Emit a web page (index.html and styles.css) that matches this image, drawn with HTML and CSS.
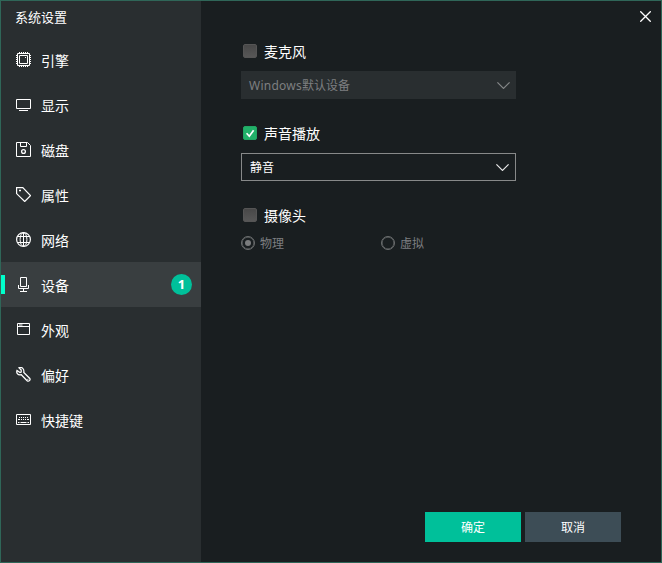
FILE: index.html
```html
<!DOCTYPE html>
<html lang="zh-CN">
<head>
<meta charset="utf-8">
<title>系统设置</title>
<link rel="stylesheet" href="styles.css">
</head>
<body>
<div class="window">
  <aside class="sidebar">
    <h1 class="title">系统设置</h1>
    <nav class="menu">
      <a class="item"><svg class="icon" viewBox="0 0 15 15"><path d="M1.5 1.5h12v12h-12z"/><path d="M3.5 3.5h8v8h-8zM9 5.5h1"/><path d="M3.5 0v2M5.5 0v2M7.5 0v2M9.5 0v2M11.5 0v2M3.5 13v2M5.5 13v2M7.5 13v2M9.5 13v2M11.5 13v2M0 3.5h2M0 5.5h2M0 7.5h2M0 9.5h2M0 11.5h2M13 3.5h2M13 5.5h2M13 7.5h2M13 9.5h2M13 11.5h2"/></svg><span>引擎</span></a>
      <a class="item"><svg class="icon" viewBox="0 0 15 15"><path d="M.5 2.5h14v9H.5zM3 13.5h9"/></svg><span>显示</span></a>
      <a class="item"><svg class="icon" viewBox="0 0 15 15"><path d="M.5.5h11l3 3v11H.5zM4.5.5v4h6v-4"/><circle cx="7.5" cy="9.5" r="1.9" stroke-width="1.3"/></svg><span>磁盘</span></a>
      <a class="item"><svg class="icon" viewBox="0 0 15 15"><path d="M.6.6h6.2l7.7 8-5.8 5.9L.6 6.6z" stroke-width="1.2"/><path d="M3 3.5h2" stroke-width="1.7"/></svg><span>属性</span></a>
      <a class="item"><svg class="icon" viewBox="0 0 15 15"><circle cx="7.5" cy="7.5" r="6.9" stroke-width="1.2"/><ellipse cx="7.5" cy="7.5" rx="3.4" ry="6.9"/><path d="M7.5.5v14M1.2 4.5h12.6M1.2 10.5h12.6"/></svg><span>网络</span></a>
      <a class="item active"><svg class="icon" viewBox="0 0 15 15"><path d="M4.5.5h6v9h-6zM2.5 8v3.5h10V8M7.5 11.5v3M4 14.5h7"/></svg><span>设备</span><b class="badge">1</b></a>
      <a class="item"><svg class="icon" viewBox="0 0 15 15"><path d="M1.5 1.5h12v11h-12zM1.5 4.5h12M3 3h3.5"/></svg><span>外观</span></a>
      <a class="item"><svg class="icon" viewBox="0 0 15 15"><path d="M3 .8 5.2 3v2L4 5.5 1 3.5C.1 6 1.8 8.5 5.3 7.7l5.8 6c1.6 1.4 3.9-.8 2.5-2.5L7.8 5.5C8.4 2 6-.4 3 .8zM11.6 12l.6.6" stroke-width="1.25"/></svg><span>偏好</span></a>
      <a class="item"><svg class="icon" viewBox="0 0 15 15"><path d="M.5 2.5h14v10H.5z"/><path d="M3 5.5h1M5 5.5h1M7 5.5h1M9 5.5h1M11 5.5h1M2 7.5h2M5 7.5h1M7 7.5h1M9 7.5h1M11 7.5h2M2 10.5h1.5M4.5 10.5h6M11.5 10.5h1.5"/></svg><span>快捷键</span></a>
    </nav>
  </aside>
  <main class="content">
    <header class="topbar"><svg class="close" viewBox="0 0 11 11"><path d="m.3.3 10.4 10.4M10.7.3.3 10.7"/></svg></header>
    <div class="form">
      <section class="group">
        <label class="check"><i class="box"></i><span>麦克风</span></label>
        <div class="select disabled"><span><span class="latin">Windows</span>默认设备</span><svg class="chevron" viewBox="0 0 13 7"><path d="m.4.4 6.1 6 6.1-6"/></svg></div>
      </section>
      <section class="group">
        <label class="check"><i class="box checked"><svg viewBox="0 0 14 14"><path d="m3.6 7.2 2.7 3 4.3-6"/></svg></i><span>声音播放</span></label>
        <div class="select"><span>静音</span><svg class="chevron" viewBox="0 0 13 7"><path d="m.4.4 6.1 6 6.1-6"/></svg></div>
      </section>
      <section class="group">
        <label class="check"><i class="box"></i><span>摄像头</span></label>
        <div class="radios">
          <label class="radio"><i class="dot on"></i><span>物理</span></label>
          <label class="radio"><i class="dot"></i><span>虚拟</span></label>
        </div>
      </section>
    </div>
    <footer class="actions">
      <button class="btn primary">确定</button>
      <button class="btn">取消</button>
    </footer>
  </main>
</div>
</body>
</html>
```
FILE: styles.css
```css
* { box-sizing: border-box; }
body {
  margin: 0;
  font-family: "Noto Sans", "Noto Sans CJK SC", sans-serif;
  color: #fff;
  background: #191e20;
}
.window {
  display: flex;
  width: 662px;
  height: 563px;
  border: 1px solid #2f6658;
  background: #191e20;
}
.sidebar { width: 200px; background: #292e30; }
.title {
  height: 36px;
  margin: 0;
  padding: 6px 0 0 14px;
  font-size: 13px;
  font-weight: 400;
  line-height: 20px;
}
.item {
  display: flex;
  align-items: center;
  height: 45px;
  padding: 0 9px 0 15px;
  font-size: 14px;
  line-height: 20px;
}
.item span { margin: 3px 0 0 10px; }
.item.active {
  padding-left: 11px;
  background: #393e40;
}
.item.active::before {
  content: "";
  width: 4px;
  height: 19px;
  margin-left: -11px;
  margin-right: 11px;
  background: #00ffcb;
}
.icon {
  flex: none;
  width: 15px;
  height: 15px;
  fill: none;
  stroke: #fff;
  stroke-width: 1;
}
.badge {
  width: 21px;
  height: 21px;
  margin-left: auto;
  border-radius: 50%;
  background: #00c09a;
  font: 700 13px/21px "Open Sans", sans-serif;
  text-align: center;
}
.content { display: flex; flex: 1; flex-direction: column; }
.topbar { display: flex; justify-content: flex-end; height: 36px; padding: 10px 10px 0 0; }
.close { width: 11px; height: 11px; fill: none; stroke: #fff; stroke-width: 1.3; }
.form { flex: 1; padding: 4px 0 0 40px; }
.group { height: 82px; }
.check {
  display: flex;
  align-items: center;
  height: 20px;
  padding-left: 2px;
  font-size: 14px;
  line-height: 20px;
}
.check span { margin: 2px 0 0 7px; }
.box {
  width: 14px;
  height: 14px;
  border: 1px solid #555;
  border-radius: 2px;
  background: linear-gradient(#484848, #575757);
}
.box.checked { border-color: #21a663; background: #21b169; }
.box svg {
  display: block;
  width: 14px;
  height: 14px;
  margin: -1px;
  fill: none;
  stroke: #fff;
  stroke-width: 1.7;
}
.select {
  display: flex;
  align-items: center;
  justify-content: space-between;
  width: 275px;
  height: 28px;
  margin-top: 10px;
  padding: 0 6px 0 8px;
  border: 1px solid #878989;
  font-size: 12px;
}
.select.disabled { padding: 0 5px 0 7px; border-color: #292e30; background: #292e30; color: #7d7f80; }
.latin { letter-spacing: .25px; }
.chevron { width: 13px; height: 7px; fill: none; stroke: #e8e8e8; stroke-width: 1.2; }
.disabled .chevron { stroke: #858788; }
.radios { display: flex; margin-top: 8px; color: #7d7f80; font-size: 12px; }
.radio { display: flex; align-items: center; width: 140px; height: 20px; }
.radio span { margin-left: 5px; }
.dot {
  display: grid;
  place-items: center;
  width: 14px;
  height: 14px;
  border: 1px solid #6c6f70;
  border-radius: 50%;
  box-shadow: inset 0 0 0 .5px #6c6f70;
}
.dot.on::before {
  content: "";
  width: 6px;
  height: 6px;
  border-radius: 50%;
  background: #7a7c7d;
}
.actions { display: flex; justify-content: flex-end; gap: 4px; padding: 0 40px 20px 0; }
.btn {
  width: 96px;
  height: 30px;
  padding: 0;
  border: 0;
  background: #3d4d56;
  color: #fff;
  font-family: inherit;
  font-size: 12px;
}
.btn.primary { background: #00c09a; }
```
